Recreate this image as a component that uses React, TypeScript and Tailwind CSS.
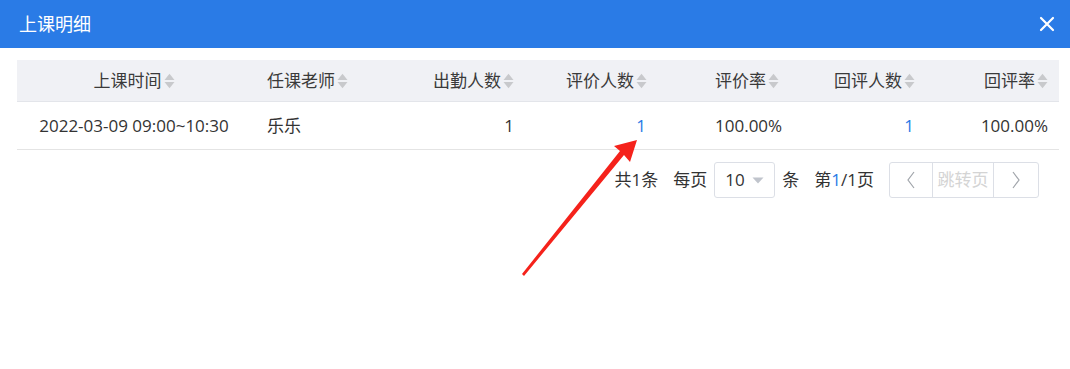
import React from 'react';

const cols = [
  { w: 'w-[233px]', align: 'justify-center text-center', pad: 'pl-[1px]' },
  { w: 'w-[150px]', align: 'justify-start text-left', pad: 'pl-[17px]' },
  { w: 'w-[128px]', align: 'justify-end text-right', pad: 'pr-[14px]' },
  { w: 'w-[171px]', align: 'justify-end text-right', pad: 'pr-[52px]' },
  { w: 'w-[98px]', align: 'justify-start text-left', pad: 'pl-4' },
  { w: 'w-[132px]', align: 'justify-end text-right', pad: 'pr-[14px]' },
  { w: 'w-[130px]', align: 'justify-end text-right', pad: 'pr-[11px]' },
];

const heads = ['上课时间', '任课老师', '出勤人数', '评价人数', '评价率', '回评人数', '回评率'];

function SortIcon() {
  return (
    <svg width="11" height="16" viewBox="0 0 11 16" className="ml-[2px] shrink-0">
      <path d="M5.5 0.8 L10.5 7 L0.5 7 Z" fill="#c8c9cc" />
      <path d="M5.5 15.2 L10.5 9 L0.5 9 Z" fill="#c8c9cc" />
    </svg>
  );
}

export default function App() {
  const row = [
    { t: '2022-03-09 09:00~10:30' },
    { t: '乐乐' },
    { t: '1' },
    { t: '1', blue: true },
    { t: '100.00%' },
    { t: '1', blue: true },
    { t: '100.00%' },
  ];
  return (
    <div
      className="relative w-[1070px] h-[369px] bg-white overflow-hidden text-[#333]"
      style={{ fontFamily: '"Open Sans", "Noto Sans CJK SC", sans-serif' }}
    >
      <div className="h-[48px] bg-[#2a7be6] flex items-center justify-between pl-[19px] pr-[15px]">
        <span className="text-white text-[18px]">上课明细</span>
        <svg width="16" height="16" viewBox="0 0 16 16">
          <path d="M2 2 L14 14 M14 2 L2 14" stroke="white" strokeWidth="2.2" strokeLinecap="round" />
        </svg>
      </div>

      <div className="ml-[17px] mr-[11px] mt-[12px]">
        <div className="flex h-[42px] bg-[#f0f1f5] border-b border-[#e3e5ea] text-[17px] text-[#3a3a3a]">
          {heads.map((h, i) => (
            <div key={h} className={`${cols[i].w} ${cols[i].align} ${cols[i].pad} flex items-center`}>
              <span>{h}</span>
              <SortIcon />
            </div>
          ))}
        </div>
        <div className="flex h-[48px] border-b border-[#e4e4e4] text-[17px]">
          {row.map((c, i) => (
            <div key={i} className={`${cols[i].w} ${cols[i].align} ${cols[i].pad} flex items-center`}>
              <span className={c.blue ? 'text-[#2a7be6] pr-[1px]' : ''}>{c.t}</span>
            </div>
          ))}
        </div>

        <div className="flex items-center justify-end mt-[12px] pr-[20px] text-[17px]">
          <span>共1条</span>
          <span className="ml-[15px]">每页</span>
          <div className="ml-[7px] w-[61px] h-[36px] border border-[#dcdfe6] rounded-[3px] flex items-center justify-between pl-[10px] pr-[10px]">
            <span>10</span>
            <svg width="12" height="7" viewBox="0 0 12 7">
              <path d="M0.5 0.5 L11.5 0.5 L6 6.5 Z" fill="#c0c4cc" />
            </svg>
          </div>
          <span className="ml-[7px]">条</span>
          <span className="ml-[15px]">
            第<span className="text-[#2a7be6]">1</span>/1页
          </span>
          <div className="ml-[15px] flex h-[36px] border border-[#dcdfe6] rounded-[3px]">
            <div className="w-[43px] flex items-center justify-center border-r border-[#dcdfe6]">
              <svg width="8" height="18" viewBox="0 0 8 18">
                <path d="M7 1 L1 9 L7 17" stroke="#a0a4aa" strokeWidth="1.2" fill="none" />
              </svg>
            </div>
            <div className="w-[61px] flex items-center justify-center border-r border-[#dcdfe6] text-[#d4d4d4]">
              跳转页
            </div>
            <div className="w-[44px] flex items-center justify-center">
              <svg width="8" height="18" viewBox="0 0 8 18">
                <path d="M1 1 L7 9 L1 17" stroke="#a0a4aa" strokeWidth="1.2" fill="none" />
              </svg>
            </div>
          </div>
        </div>
      </div>

      <svg className="absolute inset-0 pointer-events-none" width="1070" height="369" viewBox="0 0 1070 369">
        <polygon points="522,274 620,151 614,146 637,140 630,162 624,155 524,276" fill="#f5221b" />
      </svg>
    </div>
  );
}
